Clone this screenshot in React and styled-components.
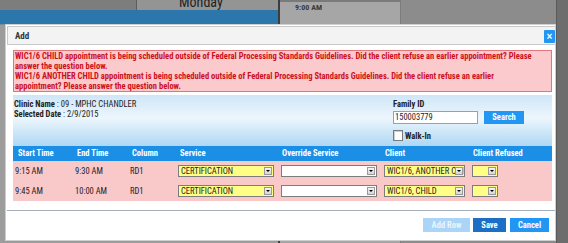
import React from 'react'
import styled, { createGlobalStyle } from 'styled-components'

const narrow = `Roboto, "Liberation Sans", Arial, sans-serif`

const GlobalStyle = createGlobalStyle`
    html, body {
        margin: 0;
        padding: 0;
    }
    body {
        width: 568px;
        height: 243px;
        overflow: hidden;
        font-family: ${narrow};
        font-stretch: 85%;
    }
`

const Screen = styled.div`
    position: relative;
    width: 568px;
    height: 243px;
    overflow: hidden;
    background: #8d8d8d;
`

/* calendar behind the overlay */
const Calendar = styled.div`
    display: grid;
    grid-template-columns: 278px 2px 120px 1fr 12px;
    height: 100%;
`

const DayColumn = styled.div`
    display: flex;
    flex-direction: column;
    background: #9c9c9c;
`

const DayTop = styled.div`
    display: grid;
    grid-template-columns: 137px 1fr;
    height: 10px;
    & > div:first-child {
        background: #7d7d7d;
        border-right: 1px solid #5e5e5e;
    }
`

const DayName = styled.div`
    background: #949494;
    overflow: hidden;
    font-size: 14px;
    line-height: 10px;
    color: #1f1f1f;
    padding-left: 42px;
    & > span {
        display: block;
        margin-top: -3px;
    }
`

const DayBar = styled.div`
    height: 14px;
    background: #2b77ab;
    border-bottom: 1px solid #6e8ea4;
`

const Divider = styled.div`
    background: #3d3d3d;
`

const TimeColumn = styled.div`
    background: #a6a6a6;
    border-top: 2px solid #7a7a7a;
    font-size: 8px;
    font-weight: bold;
    color: #3a3a3a;
    padding: 1px 0 0 15px;
`

const Filler = styled.div`
    background: #8c8c8c;
    border-left: 1px solid #7d7d7d;
`

const Scrollbar = styled.div`
    background: #6d6d6d;
    border-left: 1px solid #5a5a5a;
`

/* dialog */
const Modal = styled.div`
    position: absolute;
    top: 24px;
    left: 5px;
    width: 551px;
    height: 217px;
    box-sizing: border-box;
    background: #fff;
    border: 1px solid #cfcfcf;
    padding: 1px 0 0 1px;
    display: flex;
    flex-direction: column;
`

const Header = styled.div`
    height: 19px;
    box-sizing: border-box;
    background: #f3f3f3;
    border: 1px solid #c9c9c9;
    border-right: none;
    display: flex;
    justify-content: space-between;
    align-items: flex-end;
    padding-left: 7px;
    font-size: 9px;
    font-weight: bold;
    color: #333;
    & > span {
        align-self: center;
    }
`

const Close = styled.button`
    width: 11px;
    height: 13px;
    margin: 0 0 1px;
    padding: 0;
    border: none;
    border-radius: 1px;
    background: #2196f3;
    color: #fff;
    font-family: "Liberation Sans", Arial, sans-serif;
    font-size: 10px;
    font-weight: bold;
    line-height: 13px;
`

const Body = styled.div`
    padding: 0 3px 0 6px;
`

const ErrorBox = styled.div`
    margin-top: 5px;
    background: #fbcacc;
    border: 1px solid #e0787b;
    color: #cc1020;
    font-size: 8.5px;
    font-weight: bold;
    line-height: 10px;
    padding: 0 1px;
`

const InfoPanel = styled.div`
    margin-top: 3px;
    height: 51px;
    box-sizing: border-box;
    background: linear-gradient(#cfe6f8, #edf6fc 45%, #aed7f4);
    display: flex;
    justify-content: space-between;
    padding: 4px 28px 0 1px;
    font-size: 8.5px;
    color: #222;
    line-height: 10px;
    & b {
        font-weight: bold;
    }
`

const FamilyBlock = styled.div`
    width: 131px;
    display: grid;
    grid-template-columns: 85px 40px;
    grid-auto-rows: min-content;
    column-gap: 6px;
    font-weight: bold;
`

const FamilyLabel = styled.span`
    grid-column: 1 / 3;
    margin-bottom: 2px;
`

const TextInput = styled.div`
    height: 13px;
    box-sizing: border-box;
    border: 1px solid #8aa4bb;
    background: #fff;
    padding-left: 1px;
    font-weight: normal;
    line-height: 11px;
`

const BlueButton = styled.div`
    height: ${p => p.$h || 14}px;
    width: ${p => p.$w}px;
    box-sizing: border-box;
    background: ${p => p.$bg || '#2196f3'};
    color: ${p => p.$color || '#fff'};
    font-weight: bold;
    font-size: 8.5px;
    line-height: ${p => p.$h || 14}px;
    text-align: center;
`

const WalkIn = styled.label`
    grid-column: 1 / 3;
    margin-top: 6px;
    display: flex;
    align-items: center;
    gap: 2px;
    & > i {
        width: 8px;
        height: 9px;
        background: #fff;
        border: 1px solid #7b7b7b;
        box-shadow: inset 1px 1px 0 #cfcfcf;
    }
`

const cols = '61px 55px 49px 103px 103px 88px 1fr'

const TableHead = styled.div`
    display: grid;
    grid-template-columns: ${cols};
    height: 15px;
    background: #1b8fe6;
    color: #fff;
    font-size: 8.5px;
    font-weight: bold;
    line-height: 15px;
`

const HeadCell = styled.div`
    padding-left: ${p => p.$pad}px;
    white-space: nowrap;
`

const Row = styled.div`
    display: grid;
    grid-template-columns: ${cols};
    height: 20px;
    align-items: center;
    background: #f9c8c9;
    font-size: 8.5px;
    color: #222;
`

const Cell = styled.div`
    padding-left: ${p => p.$pad ?? 1}px;
    white-space: nowrap;
`

const SelectBox = styled.div`
    position: relative;
    width: ${p => p.$w}px;
    height: 12px;
    box-sizing: border-box;
    border: 1px solid #7c7c7c;
    background: ${p => (p.$yellow ? '#ffff86' : '#fff')};
    padding-left: 2px;
    line-height: 10px;
    overflow: hidden;
    white-space: nowrap;
`

const Arrow = styled.span`
    position: absolute;
    top: 1px;
    right: 1px;
    width: 8px;
    height: 8px;
    box-sizing: border-box;
    border: 1px solid #9a9a9a;
    background: linear-gradient(#f4f4f4, #d6d6d6);
    &::after {
        content: '';
        position: absolute;
        left: 1px;
        top: 2px;
        border-left: 2px solid transparent;
        border-right: 2px solid transparent;
        border-top: 2px solid #000;
    }
`

const Footer = styled.div`
    margin-top: 9px;
    border-top: 1px solid #a6b0ba;
    display: flex;
    justify-content: flex-end;
    gap: 3px;
    padding: 7px 6px 0 0;
    & > :last-child {
        margin-left: 1px;
    }
`

const Select = ({ w, yellow, children }) => (
    <SelectBox $w={w} $yellow={yellow}>
        {children}
        <Arrow />
    </SelectBox>
)

const headers = [
    ['Start Time', 5],
    ['End Time', 3],
    ['Column', 3],
    ['Service', 2],
    ['Override Service', 1],
    ['Client', 1],
    ['Client Refused', 1],
]

const rows = [
    { start: '9:15 AM', end: '9:30 AM', client: 'WIC1/6, ANOTHER CHILD' },
    { start: '9:45 AM', end: '10:00 AM', client: 'WIC1/6, CHILD' },
]

export default function App() {
    return (
        <Screen>
            <GlobalStyle />
            <Calendar>
                <DayColumn>
                    <DayTop>
                        <div />
                        <DayName><span>Monday</span></DayName>
                    </DayTop>
                    <DayBar />
                </DayColumn>
                <Divider />
                <TimeColumn>9:00 AM</TimeColumn>
                <Filler />
                <Scrollbar />
            </Calendar>

            <Modal>
                <Header>
                    <span>Add</span>
                    <Close>×</Close>
                </Header>
                <Body>
                    <ErrorBox>
                        WIC1/6 CHILD appointment is being scheduled outside of Federal Processing Standards Guidelines. Did the client refuse an earlier appointment? Please answer the question below.
                        <br />
                        WIC1/6 ANOTHER CHILD appointment is being scheduled outside of Federal Processing Standards Guidelines. Did the client refuse an earlier
                        <br />
                        appointment? Please answer the question below.
                    </ErrorBox>
                    <InfoPanel>
                        <div>
                            <b>Clinic Name</b> : 09 - MPHC CHANDLER
                            <br />
                            <b>Selected Date</b> : 2/9/2015
                        </div>
                        <FamilyBlock>
                            <FamilyLabel>Family ID</FamilyLabel>
                            <TextInput>150003779</TextInput>
                            <BlueButton $w={40} $h={13}>Search</BlueButton>
                            <WalkIn><i />Walk-In</WalkIn>
                        </FamilyBlock>
                    </InfoPanel>
                    <TableHead>
                        {headers.map(([label, pad]) => (
                            <HeadCell key={label} $pad={pad}>{label}</HeadCell>
                        ))}
                    </TableHead>
                    {rows.map(r => (
                        <Row key={r.start}>
                            <Cell $pad={2}>{r.start}</Cell>
                            <Cell>{r.end}</Cell>
                            <Cell>RD1</Cell>
                            <Cell $pad={0}><Select w={96} yellow>CERTIFICATION</Select></Cell>
                            <Cell $pad={0}><Select w={96} /></Cell>
                            <Cell $pad={0}><Select w={81} yellow>{r.client}</Select></Cell>
                            <Cell $pad={0}><Select w={26} yellow /></Cell>
                        </Row>
                    ))}
                </Body>
                <Footer>
                    <BlueButton $w={47} $bg="#abd5f6" $color="#e9f4fd">Add Row</BlueButton>
                    <BlueButton $w={33} $bg="#1c6fc4">Save</BlueButton>
                    <BlueButton $w={39}>Cancel</BlueButton>
                </Footer>
            </Modal>
        </Screen>
    )
}
